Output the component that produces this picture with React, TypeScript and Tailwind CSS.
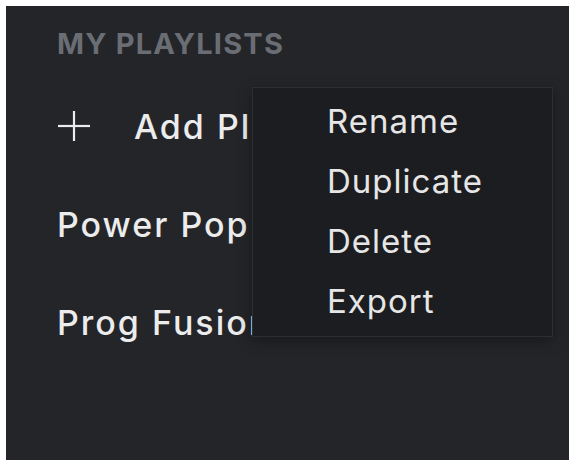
import React from 'react';

const menuItems = ["Rename", "Duplicate", "Delete", "Export"];
const playlists = ["Power Pop", "Prog Fusion"];

const PlusIcon = () => (
  <svg width="34" height="32" viewBox="0 0 34 32" fill="none" stroke="currentColor" strokeWidth="2.2" className="shrink-0">
    <line x1="17" y1="1" x2="17" y2="31" />
    <line x1="1" y1="16" x2="33" y2="16" />
  </svg>
);

const App = () => {
  return (
    <div className="w-[576px] h-[465px] bg-white pt-[6px] pl-[6px] font-['Inter',sans-serif]">
      <div className="relative w-[563px] h-[454px] bg-[#232529] pl-[51px] pt-[22px] overflow-hidden">
        <h2 className="text-[29px] leading-[32px] font-bold tracking-[1.2px] text-[#6a6e74] uppercase">
          My Playlists
        </h2>

        <div className="mt-[17px] flex flex-col w-[195px]">
          <div className="h-[98px] flex items-center text-[#ececec] overflow-hidden">
            <PlusIcon />
            <span className="ml-[43px] text-[34px] font-medium tracking-[2px] whitespace-nowrap">Add Playlist</span>
          </div>
          {playlists.map((name) => (
            <div key={name} className="h-[98px] flex items-center text-[34px] font-medium tracking-[2px] text-[#ececec] whitespace-nowrap overflow-hidden">
              {name}
            </div>
          ))}
        </div>

        <div className="absolute left-[246px] top-[81px] w-[301px] h-[250px] bg-[#1c1d20] border border-[#2d2e32] shadow-[0_4px_14px_rgba(0,0,0,0.35)] pt-[4px] pl-[74px]">
          {menuItems.map((item) => (
            <div key={item} className="h-[60px] flex items-center text-[33px] tracking-[1px] text-[#e6e6e6]">
              {item}
            </div>
          ))}
        </div>
      </div>
    </div>
  );
};

export default App;
